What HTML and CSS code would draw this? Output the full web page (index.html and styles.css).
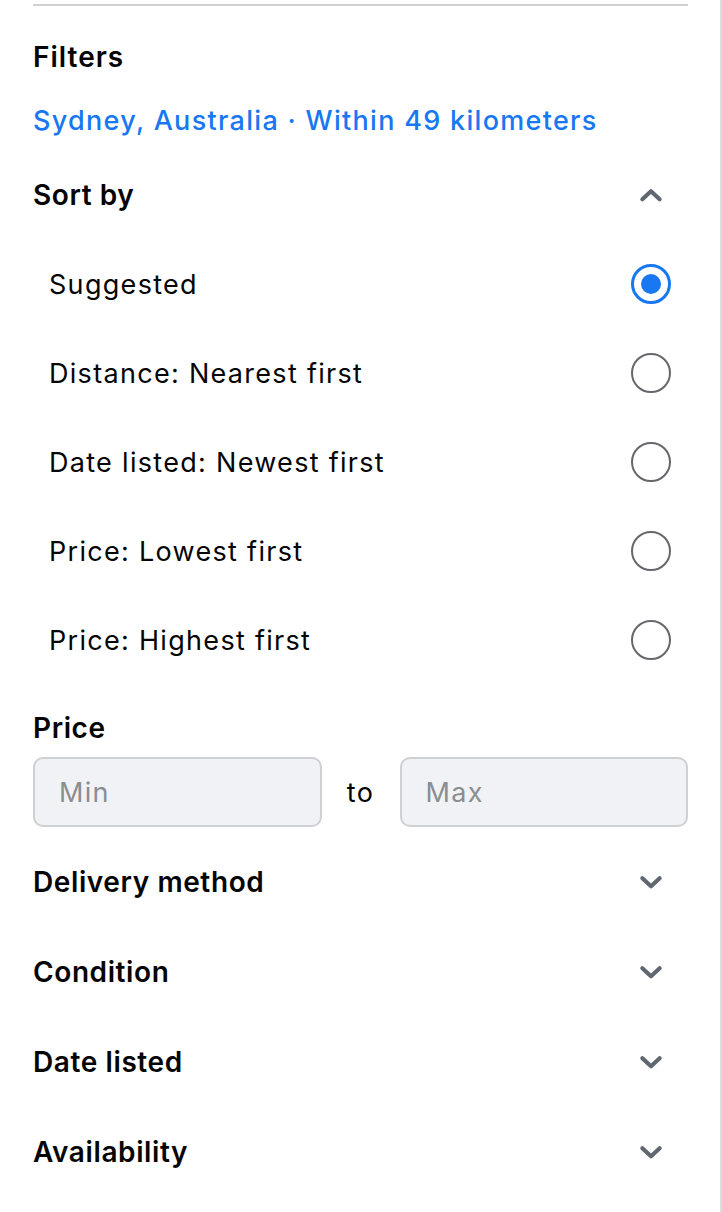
FILE: index.html
```html
<!DOCTYPE html>
<html lang="en">
<head>
    <meta charset="UTF-8">
    <meta name="viewport" content="width=device-width, initial-scale=1.0">
    <title>Filters</title>
    <link rel="stylesheet" href="styles.css">
</head>
<body>
    <div class="panel">
        <div class="divider"></div>

        <h1 class="title">Filters</h1>
        <a class="location" href="#">Sydney, Australia · Within 49 kilometers</a>

        <!-- Sort by -->
        <div class="section-head">
            <span>Sort by</span>
            <svg class="chevron" viewBox="0 0 24 24" width="26" height="26">
                <path d="M4 16 L12 8.5 L20 16" />
            </svg>
        </div>

        <div class="options">
            <label class="option">
                <span>Suggested</span>
                <span class="radio checked"></span>
            </label>
            <label class="option">
                <span>Distance: Nearest first</span>
                <span class="radio"></span>
            </label>
            <label class="option">
                <span>Date listed: Newest first</span>
                <span class="radio"></span>
            </label>
            <label class="option">
                <span>Price: Lowest first</span>
                <span class="radio"></span>
            </label>
            <label class="option">
                <span>Price: Highest first</span>
                <span class="radio"></span>
            </label>
        </div>

        <!-- Price -->
        <div class="price-label">Price</div>
        <div class="price-row">
            <input type="text" class="price-input" placeholder="Min">
            <span class="to">to</span>
            <input type="text" class="price-input" placeholder="Max">
        </div>

        <!-- Collapsed sections -->
        <div class="collapsed-list">
            <div class="section-head collapsed">
                <span>Delivery method</span>
                <svg class="chevron" viewBox="0 0 24 24" width="26" height="26"><path d="M4 8.5 L12 16 L20 8.5" /></svg>
            </div>
            <div class="section-head collapsed">
                <span>Condition</span>
                <svg class="chevron" viewBox="0 0 24 24" width="26" height="26"><path d="M4 8.5 L12 16 L20 8.5" /></svg>
            </div>
            <div class="section-head collapsed">
                <span>Date listed</span>
                <svg class="chevron" viewBox="0 0 24 24" width="26" height="26"><path d="M4 8.5 L12 16 L20 8.5" /></svg>
            </div>
            <div class="section-head collapsed">
                <span>Availability</span>
                <svg class="chevron" viewBox="0 0 24 24" width="26" height="26"><path d="M4 8.5 L12 16 L20 8.5" /></svg>
            </div>
        </div>
    </div>
</body>
</html>
```

FILE: styles.css
```css
/* General Styles */
body {
    font-family: Inter, "Noto Sans", sans-serif;
    background: #fff;
    margin: 0;
    padding: 0;
    color: #050505;
    letter-spacing: 1.3px;
}

.panel {
    width: 722px;
    height: 1212px;
    box-sizing: border-box;
    border-right: 2px solid #dadde1;
    padding: 4px 32px 0 33px;
}

.divider {
    height: 2px;
    background-color: #ced0d4;
}

.title {
    margin: 33px 0 0;
    font-size: 28px;
    line-height: 36px;
    font-weight: 600;
    letter-spacing: 1px;
}

.location {
    display: block;
    margin-top: 28px;
    font-size: 27px;
    line-height: 36px;
    font-weight: 500;
    color: #1877f2;
    text-decoration: none;
}

/* Section headers */
.section-head {
    display: flex;
    justify-content: space-between;
    align-items: center;
    height: 89px;
    margin-top: 11.5px;
    font-size: 28px;
    font-weight: 600;
    letter-spacing: 0.6px;
}

.chevron {
    margin-right: 24px;
    fill: none;
    stroke: #606770;
    stroke-width: 3.8;
    stroke-linecap: round;
    stroke-linejoin: round;
}

/* Sort options */
.option {
    display: flex;
    justify-content: space-between;
    align-items: center;
    height: 89px;
    padding-left: 16px;
    font-size: 27px;
}

.radio {
    width: 40px;
    height: 40px;
    box-sizing: border-box;
    border: 2px solid #65676b;
    border-radius: 50%;
    margin-right: 17px;
}

.radio.checked {
    border: 3px solid #1877f2;
    display: flex;
    align-items: center;
    justify-content: center;
}

.radio.checked::after {
    content: "";
    width: 20px;
    height: 20px;
    border-radius: 50%;
    background-color: #1877f2;
}

/* Price */
.price-label {
    margin-top: 25.5px;
    font-size: 28px;
    line-height: 36px;
    font-weight: 600;
    letter-spacing: 0.6px;
}

.price-row {
    display: flex;
    align-items: center;
    margin-top: 11px;
    height: 70px;
}

.price-input {
    flex: 1;
    width: 0;
    min-width: 0;
    height: 70px;
    box-sizing: border-box;
    border: 2px solid #ced0d4;
    border-radius: 10px;
    background-color: #f0f2f5;
    padding: 0 24px;
    font-family: inherit;
    font-size: 27px;
    letter-spacing: 1.3px;
    color: #050505;
}

.price-input::placeholder {
    color: #8a8d91;
}

.to {
    width: 78px;
    text-align: center;
    font-size: 27px;
}

/* Collapsed sections */
.collapsed-list {
    margin-top: 10px;
}

.section-head.collapsed {
    height: 90px;
    margin-top: 0;
}
```
